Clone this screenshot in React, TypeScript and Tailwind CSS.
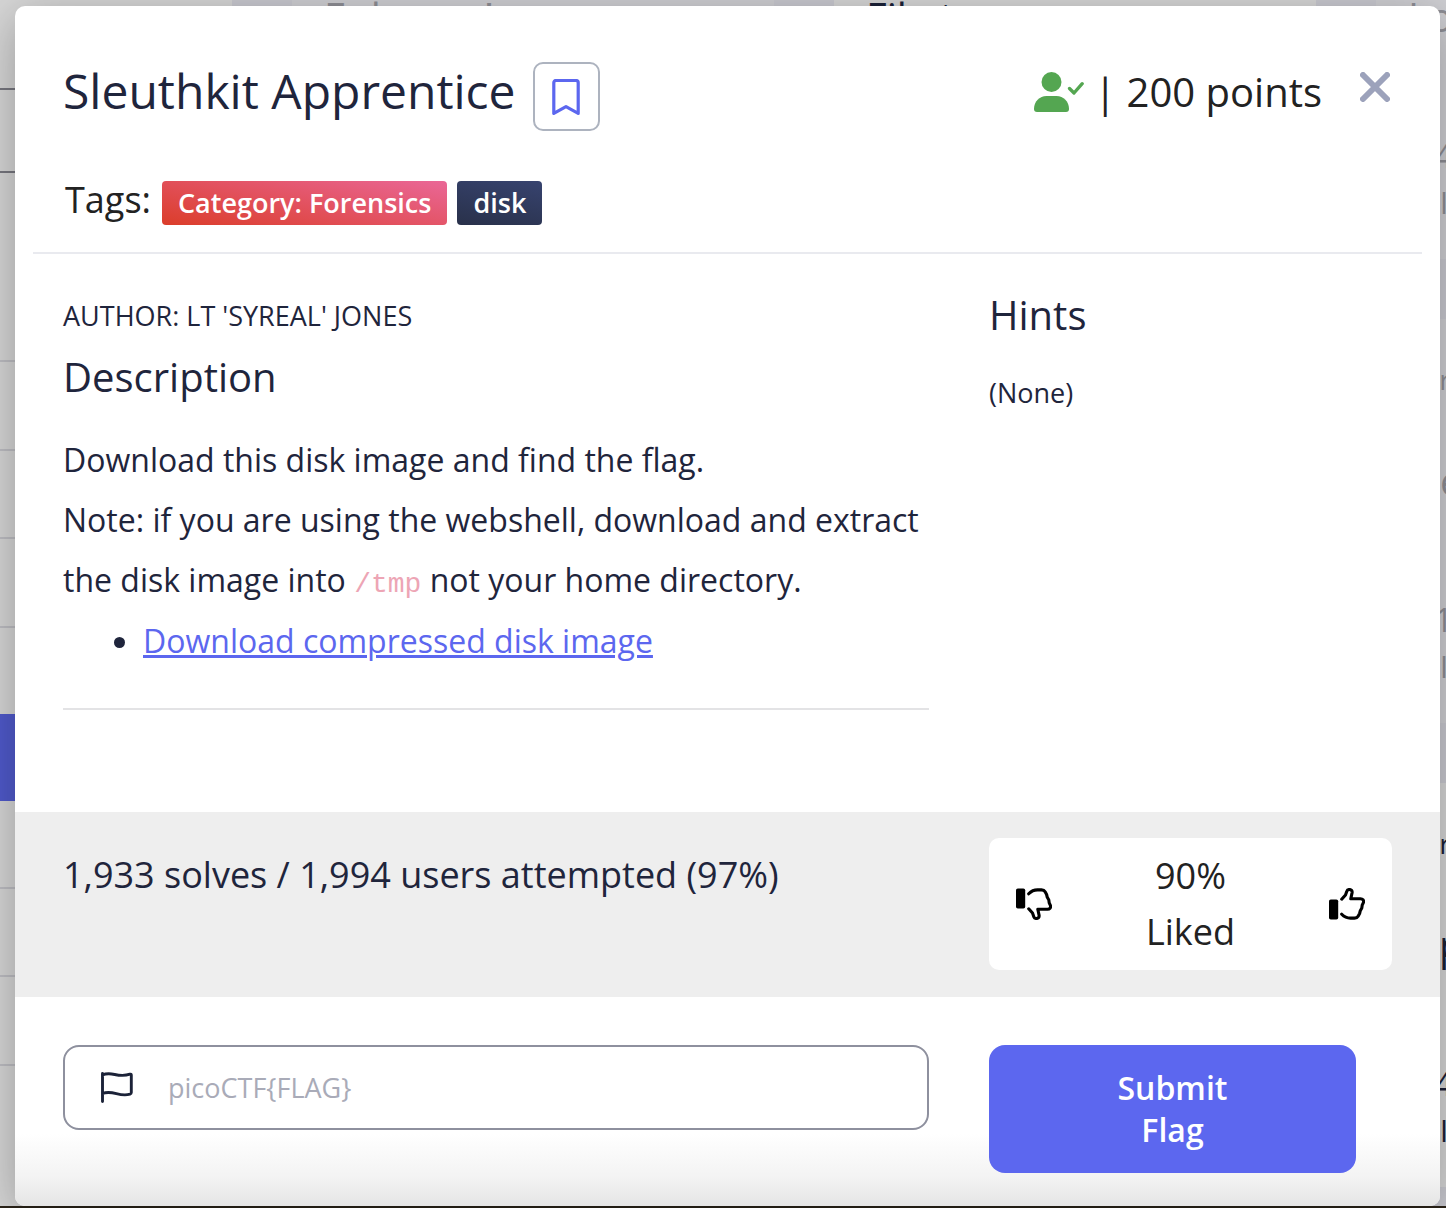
import React from "react";

const font = "font-['Open_Sans','Noto_Sans',sans-serif]";

function BookmarkIcon() {
  return (
    <svg width="28" height="36" viewBox="0 0 28 36" fill="none" aria-hidden="true">
      <path
        d="M4 1.5H24a2.2 2.2 0 0 1 2.2 2.2V34.4L14 27.6 1.8 34.4V3.7A2.2 2.2 0 0 1 4 1.5Z"
        stroke="#5c67ef"
        strokeWidth="3.200"
        strokeLinejoin="round"
      />
    </svg>
  );
}

function UserCheckIcon() {
  return (
    <svg width="50" height="40" viewBox="0 0 50 40" aria-hidden="true">
      <circle cx="17.5" cy="10" r="10" fill="#54a651" />
      <path d="M0 37C0 29.500 5.500 24 12.500 24H22.500C29.500 24 35 29.500 35 37Q35 40 32 40H3Q0 40 0 37Z" fill="#54a651" />
      <path d="m35.500 16.500 4.500 4.500 8.200-9.300" fill="none" stroke="#54a651" strokeWidth="3.300" strokeLinecap="round" strokeLinejoin="round" />
    </svg>
  );
}

function CloseIcon() {
  return (
    <svg width="30" height="30" viewBox="0 0 30 30" aria-hidden="true">
      <path d="M3 3 27 27M27 3 3 27" stroke="#9ca2bb" strokeWidth="6" strokeLinecap="round" />
    </svg>
  );
}

function ThumbIcon({ down = false }: { down?: boolean }) {
  return (
    <svg width="36" height="32" viewBox="0 0 36 32" fill="none" aria-hidden="true">
      <g transform={down ? "matrix(1 0 0 -1 0 32)" : undefined}>
        <rect x="0" y="11.500" width="9.200" height="20" rx="1.800" fill="#000" />
        <path
          d="M12.700 11.200 16.500 7 17.900 3.100C18.300 1.900 19.300 1.500 20.400 1.500 22.200 1.500 23.400 2.700 23.100 4.600L21.800 10.800H31.500C33.800 10.800 35 12.200 34.500 14.300L33.200 17.100 32.800 20.100 31.300 22.700 30.600 25.500 29.100 28.300C28.300 29.800 27.300 30.100 25.500 30.100H21.500C18 30.100 15 28.600 12.700 26.200"
          stroke="#000"
          strokeWidth="3.100"
          strokeLinecap="round"
          strokeLinejoin="round"
        />
      </g>
    </svg>
  );
}

function FlagIcon() {
  return (
    <svg width="32" height="31" viewBox="0 0 32 31" fill="none" aria-hidden="true">
      <path
        d="M1.500 29.500V1.500M1.500 3C11-1.500 16 6.500 29 2.200Q30.300 1.800 30.300 3V20.500Q30.300 21.700 29 22.200C18 25.500 12 17.500 1.500 21.500"
        stroke="#1b2238"
        strokeWidth="2.900"
        strokeLinecap="round"
        strokeLinejoin="round"
      />
    </svg>
  );
}

type Tile = { title: string; solves: string; solved: boolean };

function ChallengeTile({ title, solves, solved }: Tile) {
  return (
    <div
      className={`h-[404px] shrink-0 overflow-hidden whitespace-nowrap pl-8 pt-11 ${
        solved ? "bg-[#d0d0d4] text-[#8f8f96]" : "bg-[#d7d7d7] text-[#1b2238]"
      }`}
    >
      <p className="text-[28px] leading-8">Forensics</p>
      <p className="mt-[58px] text-[40px] leading-[56px]">{title}</p>
      <p className="mt-[86px] text-[32px] leading-[50px]">{solves}</p>
      <p className="text-[30px] leading-[44px]">solves</p>
    </div>
  );
}

const columns: Tile[][] = [
  [{ title: "Enhance!", solves: "5,210", solved: true }],
  [{ title: "File types", solves: "3,127", solved: false }],
  [
    { title: "Lookey here", solves: "1,402", solved: true },
    { title: "Sleuthkit Intro", solves: "1,118", solved: true },
    { title: "Operation Orchid", solves: "1,402", solved: false },
  ],
];

function FilterRows() {
  return (
    <div className="w-[232px] shrink-0 bg-[#d7d7d7]">
      <div className="h-[90px] border-b-2 border-[#77777f]" />
      <div className="h-[83px] border-b-2 border-[#77777f]" />
      <div className="h-[189px] border-b-2 border-[#bebec3]" />
      <div className="h-[89px] border-b-2 border-[#bebec3]" />
      <div className="h-[88px] border-b-2 border-[#bebec3]" />
      <div className="h-[89px] border-b-2 border-[#bebec3]" />
      <div className="mt-[86px] h-[87px] bg-[#505acc]" />
      <div className="h-[88px] border-b-2 border-[#bebec3]" />
      <div className="h-[88px] border-b-2 border-[#bebec3]" />
      <div className="h-[89px] border-b-2 border-[#bebec3]" />
    </div>
  );
}

function Backdrop() {
  return (
    <div className="absolute inset-x-0 bottom-[2px] top-0 flex overflow-hidden bg-[#cacad1]" aria-hidden="true">
      <FilterRows />
      {columns.map((tiles, i) => (
        <div key={i} className="-mt-[145px] ml-[60px] flex w-[482px] shrink-0 flex-col gap-[60px]">
          {tiles.map((t) => (
            <ChallengeTile key={t.title} {...t} />
          ))}
        </div>
      ))}
    </div>
  );
}

export default function App() {
  return (
    <div className={`relative min-h-screen overflow-hidden bg-[#2b2419] pb-[2px] pl-[15px] pr-[6px] pt-[6px] text-[#1f253c] ${font}`}>
      <Backdrop />
      <main
        role="dialog"
        aria-labelledby="challenge-title"
        className="relative overflow-hidden rounded-[10px] bg-white shadow-[0_10px_50px_rgba(0,0,0,0.3)]"
      >
        <header className="mx-[18px] border-b-2 border-[#e9eaef] pb-[27px] pl-[30px] pr-8 pt-14">
          <div className="flex items-start justify-between">
            <div className="flex items-start gap-[17px]">
              <h1 id="challenge-title" className="text-[48px] leading-[58px]">
                Sleuthkit Apprentice
              </h1>
              <button
                type="button"
                aria-label="Bookmark"
                className="flex h-[69px] w-[67px] items-center justify-center rounded-[10px] border-2 border-[#adb3bf]"
              >
                <BookmarkIcon />
              </button>
            </div>
            <div className="flex items-start text-[40px] leading-[60px] text-[#222]">
              <span className="mt-[10px]">
                <UserCheckIcon />
              </span>
              <span className="ml-[10px]">| 200 points</span>
              <button type="button" aria-label="Close" className="ml-[38px] mt-[10px]">
                <CloseIcon />
              </button>
            </div>
          </div>
          <div className="mt-[50px] flex items-start text-white">
            <span className="ml-[2px] mr-[11px] text-[36px] leading-[38px] text-[#222]">Tags:</span>
            <span className="mr-[10px] rounded bg-linear-[12deg,#db3d2a,#ea6797] px-4 text-[27px] font-semibold leading-[44px]">
              Category: Forensics
            </span>
            <span className="rounded bg-linear-[12deg,#29314a,#37436f] px-4 text-[27px] font-semibold leading-[44px]">disk</span>
          </div>
        </header>

        <section className="grid grid-cols-3 gap-x-[60px] px-12 pb-[102px] pt-10">
          <div className="col-span-2 border-b-2 border-[#e3e3e5] pb-[37px]">
            <p className="text-[27px] leading-[44px]">AUTHOR: LT 'SYREAL' JONES</p>
            <h2 className="mt-3 text-[40px] leading-[54px]">Description</h2>
            <div className="mt-[26px] text-[32px] leading-[60px]">
              <p>Download this disk image and find the flag.</p>
              <p>
                Note: if you are using the webshell, download and extract the disk image into{" "}
                <code className="font-['Liberation_Mono',monospace] text-[28px] leading-none text-[#eda5b5]">/tmp</code> not your
                home directory.
              </p>
              <ul className="mt-px list-disc pl-20">
                <li>
                  <a href="#disk-image" className="text-[#5c67ef] underline">
                    Download compressed disk image
                  </a>
                </li>
              </ul>
            </div>
          </div>
          <div>
            <h2 className="text-[40px] leading-[42px]">Hints</h2>
            <p className="mt-[35px] text-[27px] leading-[44px]">(None)</p>
          </div>
        </section>

        <section className="grid grid-cols-3 gap-x-[60px] bg-[#eee] px-12 pb-[27px] pt-[26px]">
          <p className="col-span-2 pt-[9px] text-[36px] leading-[56px]">1,933 solves / 1,994 users attempted (97%)</p>
          <div className="flex items-center justify-between rounded-[10px] bg-white px-[27px] py-[10px]">
            <button type="button" aria-label="Dislike">
              <ThumbIcon down />
            </button>
            <p className="w-24 text-center text-[36px] leading-[56px] text-[#222]">90% Liked</p>
            <button type="button" aria-label="Like">
              <ThumbIcon />
            </button>
          </div>
        </section>

        <form
          className="grid grid-cols-3 items-start gap-x-[60px] bg-[linear-gradient(to_top,#e5e5e5,#f3f3f3_28px,#fff_72px)] px-12 pb-[33px] pt-12"
          onSubmit={(e) => e.preventDefault()}
        >
          <label className="col-span-2 flex h-[85px] items-center rounded-2xl border-2 border-[#8e909e] bg-white pl-9 pr-6">
            <FlagIcon />
            <input
              type="text"
              aria-label="Flag"
              placeholder="picoCTF{FLAG}"
              className="ml-[35px] min-w-0 flex-1 bg-transparent text-[27px] leading-9 outline-none placeholder:text-[#a9abb8]"
            />
          </label>
          <button
            type="submit"
            className="mr-9 rounded-2xl bg-[#5c67ef] px-24 py-[22px] text-[32px] font-semibold leading-[42px] text-white"
          >
            Submit Flag
          </button>
        </form>
      </main>
    </div>
  );
}
